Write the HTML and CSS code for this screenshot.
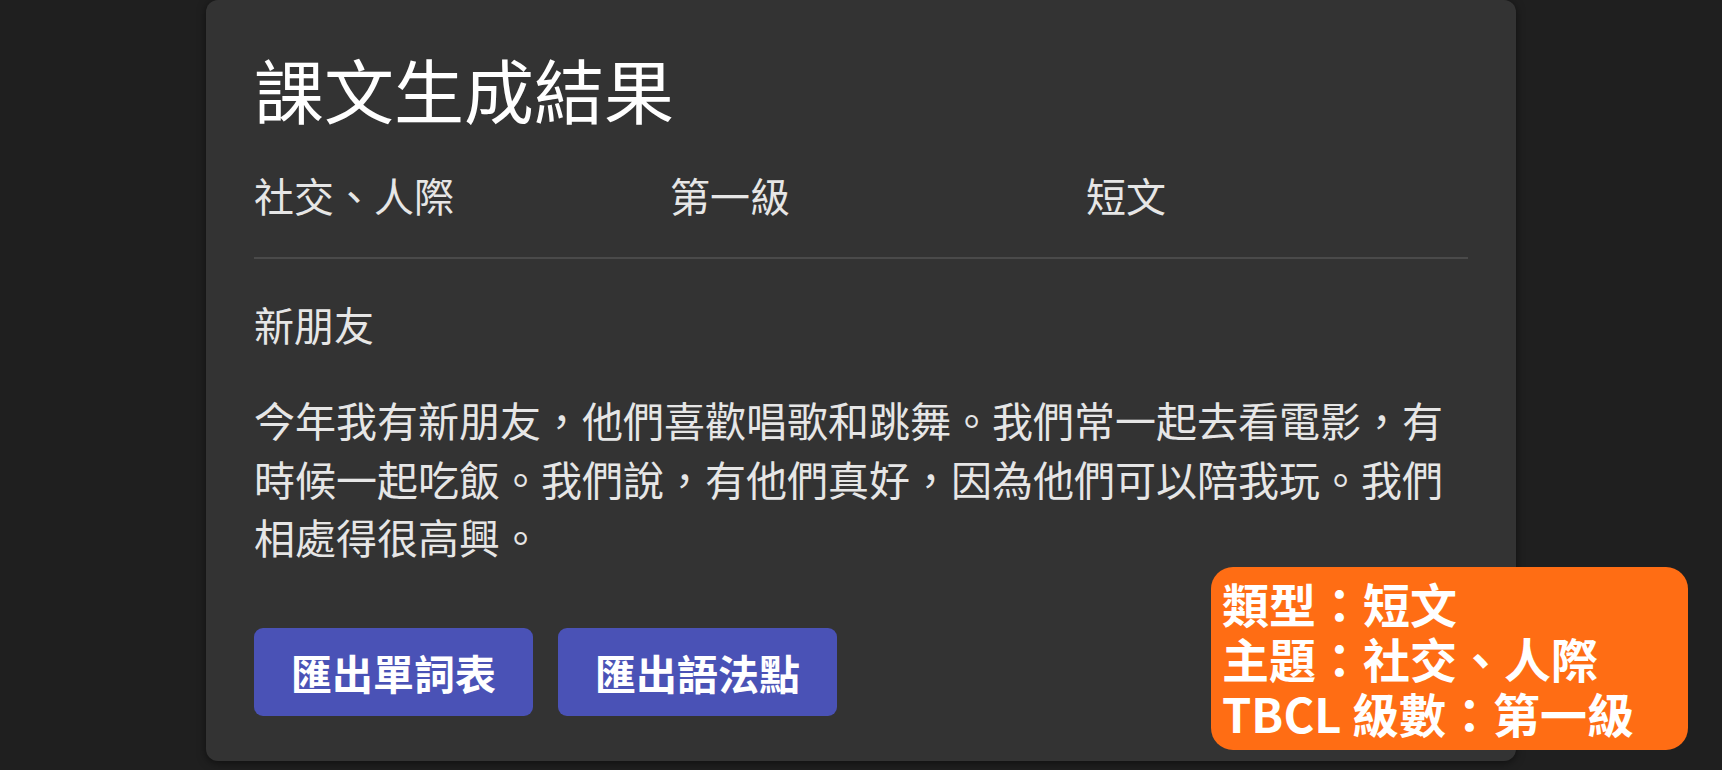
FILE: index.html
```html
<!DOCTYPE html>
<html lang="zh-TW">
<head>
    <meta charset="UTF-8">
    <meta name="viewport" content="width=device-width, initial-scale=1.0">
    <title>課文生成結果</title>
    <link rel="stylesheet" href="styles.css">
</head>
<body>
    <main class="page">
        <section class="card">
            <h1 class="card-title">課文生成結果</h1>
            <div class="meta">
                <span>社交<span class="pc">、</span>人際</span>
                <span>第一級</span>
                <span>短文</span>
            </div>
            <hr class="divider">
            <h2 class="lesson-title">新朋友</h2>
            <p class="lesson-text">今年我有新朋友<span class="pc">，</span>他們喜歡唱歌和跳舞<span class="pc">。</span>我們常一起去看電影<span class="pc">，</span>有時候一起吃飯<span class="pc">。</span>我們說<span class="pc">，</span>有他們真好<span class="pc">，</span>因為他們可以陪我玩<span class="pc">。</span>我們相處得很高興<span class="pc">。</span></p>
            <div class="actions">
                <button type="button" class="btn">匯出單詞表</button>
                <button type="button" class="btn">匯出語法點</button>
            </div>
        </section>
    </main>

    <div class="note">
        <div>類型：短文</div>
        <div>主題：社交<span class="pc">、</span>人際</div>
        <div>TBCL 級數：第一級</div>
    </div>
</body>
</html>
```

FILE: styles.css
```css
html, body {
    margin: 0;
    height: 100%;
}
body {
    background: #1f1f1f;
    font-family: "Noto Sans CJK TC", "Noto Sans", sans-serif;
    color: #e6e6e6;
    overflow: hidden;
}
.page {
    display: flex;
    justify-content: center;
}
.card {
    width: 1310px;
    box-sizing: border-box;
    padding: 47px 48px 45px;
    background: #333333;
    border-radius: 12px;
    box-shadow: 0 2px 8px rgba(0,0,0,0.5);
}
.card-title {
    margin: 0;
    font-size: 70px;
    font-weight: 400;
    line-height: 84px;
    color: #ffffff;
}
.meta {
    display: grid;
    grid-template-columns: repeat(3, 1fr);
    column-gap: 34px;
    margin-top: 34px;
    font-size: 40px;
    line-height: 60px;
}
.divider {
    margin: 32px 0 0;
    border: none;
    height: 2px;
    background: #4a4a4a;
}
.lesson-title {
    margin: 35px 0 0;
    font-size: 40px;
    font-weight: 400;
    line-height: 60px;
}
.lesson-text {
    margin: 36px 0 0;
    font-size: 41px;
    line-height: 58.6px;
}
.pc {
    font-kerning: none;
}
.actions {
    display: flex;
    gap: 25px;
    margin-top: 62px;
}
.btn {
    height: 88px;
    padding: 0 37px;
    background: #4a52b6;
    color: #ffffff;
    border: none;
    border-radius: 9px;
    font-family: inherit;
    font-size: 41px;
    font-weight: 700;
    cursor: pointer;
}
.note {
    position: absolute;
    right: 34px;
    bottom: 20px;
    width: 477px;
    box-sizing: border-box;
    padding: 8px 11px 10px;
    background: #ff6d14;
    border-radius: 22px;
    color: #ffffff;
    font-size: 47px;
    font-weight: 700;
    line-height: 55px;
}
```
